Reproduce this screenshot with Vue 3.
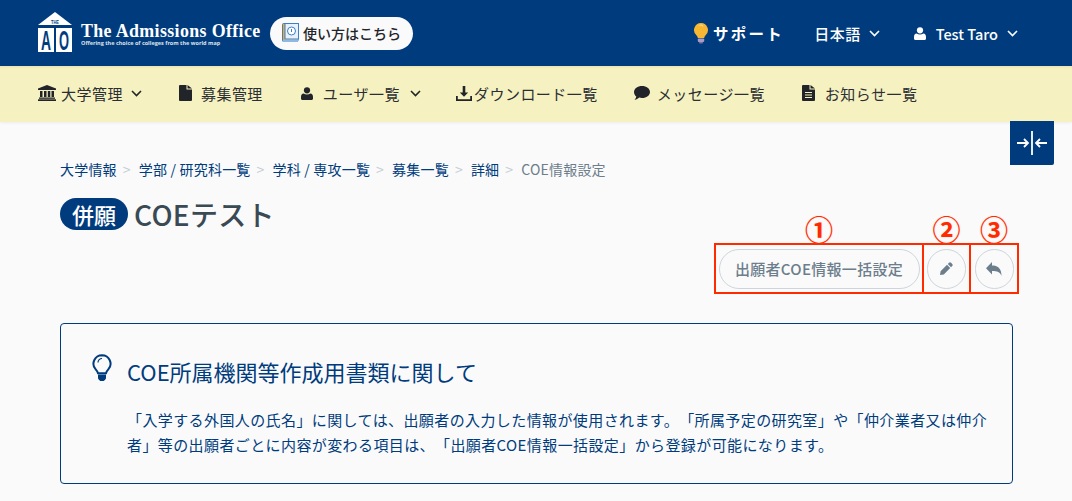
<script setup>
const crumbs = ['大学情報', '学部 / 研究科一覧', '学科 / 専攻一覧', '募集一覧', '詳細']
</script>

<template>
  <div class="page">
    <header class="top">
      <div class="brand">
        <svg class="logo" width="34" height="40" viewBox="0 0 34 40">
          <path d="M17 0 L34 13 L0 13 Z" fill="#fff" />
          <rect x="0" y="16" width="16" height="24" fill="#fff" />
          <rect x="18" y="16" width="16" height="24" fill="#fff" />
          <text x="17" y="12" class="lg-the" textLength="8" lengthAdjust="spacingAndGlyphs">THE</text>
          <text x="8" y="38" class="lg-big" textLength="10" lengthAdjust="spacingAndGlyphs">A</text>
          <text x="26" y="38" class="lg-big" textLength="10" lengthAdjust="spacingAndGlyphs">O</text>
        </svg>
        <div class="brand-text">
          <div class="brand-name">The Admissions Office</div>
          <div class="brand-sub">Offering the choice of colleges from the world map</div>
        </div>
        <a class="howto">
          <svg width="17" height="20" viewBox="0 0 17 20">
            <rect x="0.500" y="0.500" width="15.500" height="18" rx="1" fill="#f0a92e" stroke="#3d7fc4" />
            <rect x="3" y="0.500" width="13.500" height="15.500" fill="#e6f1fb" stroke="#3d7fc4" />
            <circle cx="9.500" cy="8" r="4" fill="#fff" stroke="#3d7fc4" />
            <path d="M9.500 6v3" stroke="#3d7fc4" />
            <rect x="1" y="16.500" width="15" height="2.500" fill="#8db9e4" />
          </svg>
          <span>使い方はこちら</span>
        </a>
      </div>
      <nav class="top-right">
        <a class="support">
          <svg width="16" height="22" viewBox="0 0 16 22">
            <path d="M8 1a7 7 0 0 0-4.400 12.400c.8.800 1.200 1.600 1.200 2.600h6.400c0-1 .4-1.800 1.200-2.600A7 7 0 0 0 8 1z" fill="#f7b733" />
            <path d="M8 2.500a5 5 0 0 0-3 1.500c2-.8 4-.5 5 1 .6-1.500-.6-2.500-2-2.500z" fill="#fde39a" />
            <rect x="4.800" y="16.500" width="6.400" height="3.500" rx="1" fill="#a99bc4" />
            <rect x="6" y="20" width="4" height="1.500" rx=".7" fill="#7d6fa0" />
          </svg>
          <span>サポート</span>
        </a>
        <a class="lang">日本語<svg class="chev" width="11" height="7" viewBox="0 0 11 7"><path d="M1 1l4.500 4.500L10 1" /></svg></a>
        <a class="user">
          <svg width="12" height="13" viewBox="0 0 12 13" fill="#fff"><circle cx="6" cy="3.300" r="3.100" /><path d="M2.600 6.600C3.500 7.300 4.700 7.600 6 7.600s2.500-.3 3.400-1c1.600.2 2.600 1.500 2.600 3.300v1.600c0 .9-.6 1.500-1.500 1.500h-9C.6 13 0 12.400 0 11.500V9.900c0-1.800 1-3.100 2.600-3.300z" /></svg>
          <span>Test Taro</span>
          <svg class="chev" width="11" height="7" viewBox="0 0 11 7"><path d="M1 1l4.500 4.500L10 1" /></svg>
        </a>
      </nav>
    </header>

    <nav class="sub">
      <a class="s1">
        <svg width="18" height="16" viewBox="0 0 18 16" fill="#212529"><path d="M9 0L18 3.500V5H0V3.500z" /><rect x="2" y="6" width="2.500" height="6" /><rect x="6" y="6" width="2.500" height="6" /><rect x="9.800" y="6" width="2.500" height="6" /><rect x="13.500" y="6" width="2.500" height="6" /><rect x="1" y="12.500" width="16" height="1.300" /><rect x="0" y="14.300" width="18" height="1.700" /></svg>
        <span>大学管理</span>
        <svg class="chev dark" width="11" height="7" viewBox="0 0 11 7"><path d="M1 1l4.500 4.500L10 1" /></svg>
      </a>
      <a class="s2">
        <svg width="13" height="16" viewBox="0 0 13 16" fill="#212529"><path d="M0 1a1 1 0 0 1 1-1h6.500v4.500H13V15a1 1 0 0 1-1 1H1a1 1 0 0 1-1-1z" /><path d="M8.500 0L13 3.600H8.500z" /></svg>
        <span>募集管理</span>
      </a>
      <a class="s3">
        <svg width="12" height="13" viewBox="0 0 12 13" fill="#212529"><circle cx="6" cy="3.300" r="3.100" /><path d="M2.600 6.600C3.500 7.300 4.700 7.600 6 7.600s2.500-.3 3.400-1c1.600.2 2.600 1.500 2.600 3.300v1.600c0 .9-.6 1.500-1.500 1.500h-9C.6 13 0 12.400 0 11.500V9.900c0-1.800 1-3.100 2.600-3.300z" /></svg>
        <span>ユーザ一覧</span>
        <svg class="chev dark" width="11" height="7" viewBox="0 0 11 7"><path d="M1 1l4.500 4.500L10 1" /></svg>
      </a>
      <a class="s4">
        <svg width="16" height="15" viewBox="0 0 16 15" fill="#212529"><path d="M6.700 0h2.600v6.500h2.900L8 10.800 3.800 6.500h2.900z" /><path d="M0 10h1.800v3.200h12.400V10H16v5H0z" /></svg>
        <span>ダウンロード一覧</span>
      </a>
      <a class="s5">
        <svg width="16" height="14" viewBox="0 0 16 14" fill="#212529"><path d="M8 0c4.400 0 8 2.600 8 6s-3.600 6-8 6c-1 0-1.900-.1-2.800-.4C4 12.600 2.500 13.600.6 14c.9-1 1.500-2.200 1.700-3.400C.9 9.500 0 7.800 0 6c0-3.400 3.600-6 8-6z" /></svg>
        <span>メッセージ一覧</span>
      </a>
      <a class="s6">
        <svg width="13" height="16" viewBox="0 0 13 16"><path d="M0 1a1 1 0 0 1 1-1h6.500v4.500H13V15a1 1 0 0 1-1 1H1a1 1 0 0 1-1-1z" fill="#212529" /><path d="M8.500 0L13 3.600H8.500z" fill="#212529" /><path d="M3 7.500h7M3 10h7M3 12.500h7" stroke="#f6f1c1" stroke-width="1.200" /></svg>
        <span>お知らせ一覧</span>
      </a>
    </nav>

    <main class="main">
      <button class="collapse" aria-label="collapse">
        <svg width="30" height="24" viewBox="0 0 30 24" fill="none" stroke="#fff" stroke-width="1.800">
          <path d="M15 0v24" />
          <path d="M0 12h11M7 8l4 4-4 4" />
          <path d="M30 12H19M23 8l-4 4 4 4" />
        </svg>
      </button>

      <ol class="crumbs">
        <li v-for="c in crumbs" :key="c"><a>{{ c }}</a><i>&gt;</i></li>
        <li class="cur">COE情報設定</li>
      </ol>

      <h1 class="title"><span class="badge">併願</span><span class="title-text">COEテスト</span></h1>

      <div class="actions">
        <div class="act a1">
          <span class="num">①</span>
          <button class="pill">出願者COE情報一括設定</button>
        </div>
        <div class="act a2">
          <span class="num">②</span>
          <button class="round">
            <svg width="13" height="13" viewBox="0 0 13 13" fill="#6c7d8c"><path d="M9 .8a1.500 1.500 0 0 1 2.100 0l1.100 1.100a1.500 1.500 0 0 1 0 2.100L11 5.200 7.800 2zM7 2.800L10.200 6l-6.400 6.400L0 13l.6-3.800z" /></svg>
          </button>
        </div>
        <div class="act a3">
          <span class="num">③</span>
          <button class="round">
            <svg width="16" height="14" viewBox="0 0 16 14" fill="#6c7d8c"><path d="M6 0v3.500c5.500 0 9.500 2.500 9.500 10.500-1.300-3.800-4.200-5-9.500-5v3.500L0 6.200z" /></svg>
          </button>
        </div>
      </div>

      <section class="note">
        <div class="note-head">
          <svg width="20" height="29" viewBox="0 0 20 29" fill="none">
            <path d="M10 1.200a8.500 8.500 0 0 0-6.300 14.200c1.200 1.400 2 2.700 2.300 3.800h8c.3-1.100 1.100-2.400 2.300-3.800A8.500 8.500 0 0 0 10 1.200z" stroke="#003c7d" stroke-width="2" />
            <path d="M6 20.500h8v3.500c0 .6-.3 1-.7 1.400l-1 1c-.4.400-.9.600-1.300.6H9c-.4 0-.9-.2-1.300-.6l-1-1C6.300 25 6 24.600 6 24z" fill="#003c7d" />
            <path d="M10 4.500a4 4 0 0 0-4 4" stroke="#003c7d" stroke-width="1.200" />
          </svg>
          <h2>COE所属機関等作成用書類に関して</h2>
        </div>
        <p>「入学する外国人の氏名」に関しては、出願者の入力した情報が使用されます。「所属予定の研究室」や「仲介業者又は仲介者」等の出願者ごとに内容が変わる項目は、「出願者COE情報一括設定」から登録が可能になります。</p>
      </section>
    </main>
  </div>
</template>

<style>
html, body { margin: 0; background: #fafafa; overflow: hidden; }
</style>

<style scoped>
.page {
  width: 1072px;
  height: 501px;
  overflow: hidden;
  background: #fafafa;
  font-family: "Noto Sans CJK JP", "Noto Sans", sans-serif;
  color: #212529;
  text-spacing-trim: space-all;
  letter-spacing: 0.030em;
}
a { display: flex; align-items: center; }

.top {
  height: 66px;
  background: #003c7d;
  display: flex;
  justify-content: space-between;
  align-items: center;
  color: #fff;
  box-sizing: border-box;
  padding: 0 54px 0 38px;
}
.brand { display: flex; align-items: center; }
.logo { margin-top: -2px; overflow: visible; }
.lg-the { font: 700 6px "Liberation Sans", sans-serif; fill: #003c7d; text-anchor: middle; letter-spacing: 0; }
.lg-big { font: 700 27px "Liberation Sans", sans-serif; fill: #003c7d; text-anchor: middle; letter-spacing: 0; }
.brand-text { margin-left: 9px; width: 179px; margin-top: 2px; }
.brand-name {
  font: 700 17.900px/18px "Liberation Serif", serif;
  white-space: nowrap;
  letter-spacing: 0.020em;
}
.brand-sub {
  font: 700 5.500px/7px "Open Sans", sans-serif;
  white-space: nowrap;
  letter-spacing: 0;
  opacity: .85;
}
.howto {
  margin-left: 10px;
  height: 33px;
  width: 143px;
  box-sizing: border-box;
  background: #fafafa;
  border-radius: 17px;
  color: #212529;
  padding-left: 12px;
  gap: 4px;
  font-size: 14px;
  letter-spacing: 0;
  font-weight: 500;
  white-space: nowrap;
}
.top-right { display: flex; align-items: center; font-size: 15px; letter-spacing: 0; }
.support { font-weight: 700; letter-spacing: 2.300px; gap: 4px; margin-right: 30px; font-size: 15.500px; }
.lang { gap: 8px; margin-right: 34px; font-weight: 500; letter-spacing: .5px; }
.user { font-weight: 500; font-size: 14.500px; }
.user span { margin: 0 9px 0 10px; }
.chev { fill: none; stroke: #fff; stroke-width: 1.600; }
.chev.dark { stroke: #212529; }

.sub {
  height: 56px;
  background: #f6f1c1;
  display: flex;
  align-items: center;
  padding: 0 0 2px 38px;
  box-sizing: border-box;
  font-size: 15px;
  color: #2b2f33;
  white-space: nowrap;
  box-shadow: 0 1px 3px rgba(0,0,0,.06), inset 0 3px 3px -2px rgba(0,0,0,.07);
}
.s1 { gap: 5px; }
.s1 .chev { margin-left: 3px; }
.s2 { margin-left: 37px; gap: 9px; }
.s3 { margin-left: 38px; gap: 10px; }
.s4 { margin-left: 35px; gap: 2px; }
.s5 { margin-left: 35px; gap: 6px; }
.s5 svg { width: 18px; }
.s6 { margin-left: 37px; gap: 10px; }

.main { position: relative; padding: 0 59px 0 60px; }
.collapse {
  position: absolute;
  top: -1px;
  right: 18px;
  width: 44px;
  height: 44px;
  border: 0;
  padding: 0;
  border-radius: 0 0 2px 0;
  background: #003c7d;
  display: flex;
  align-items: center;
  justify-content: center;
}
.crumbs {
  list-style: none;
  margin: 0;
  padding: 37px 0 0;
  display: flex;
  font-size: 14px;
  line-height: 20px;
  color: #003c7d;
  letter-spacing: 0.200px;
}
.crumbs li { display: flex; }
.crumbs i { font-style: normal; color: #c3ccd4; margin: 0 8px 0 6px; }
.crumbs .cur { color: #6c7d8c; }
.title {
  margin: 16px 0 0;
  display: flex;
  align-items: center;
  font-size: 28px;
  line-height: 38px;
  font-weight: 500;
  color: #3a4a54;
  letter-spacing: 0;
}
.title-text { letter-spacing: .3px; }
.badge {
  width: 68px;
  height: 32px;
  margin-right: 6px;
  border-radius: 16px;
  background: #003c7d;
  color: #fff;
  font-size: 22px;
  font-weight: 500;
  line-height: 32px;
  text-align: center;
}
.actions {
  display: flex;
  justify-content: flex-end;
  margin: 10px 0 0;
  padding-top: 0;
  transform: translateX(6px);
}
.act {
  box-sizing: border-box;
  height: 51px;
  border: 2px solid #ff2a00;
  display: flex;
  align-items: center;
  justify-content: center;
  position: relative;
}
.a1 { width: 210px; }
.a2 { width: 49px; margin-left: -2px; }
.a3 { width: 50px; margin-left: -2px; }
.num {
  position: absolute;
  top: -30px;
  left: 0;
  right: 0;
  text-align: center;
  color: #ff2a00;
  font-size: 28px;
  line-height: 28px;
  font-weight: 700;
  letter-spacing: 0;
  text-shadow: 0 0 1px rgba(255, 120, 80, .5);
}
.pill, .round {
  box-sizing: border-box;
  height: 40px;
  border: 1px solid #cdd5dc;
  border-radius: 20px;
  background: transparent;
  color: #6c7d8c;
  font-family: inherit;
  font-size: 15px;
  font-weight: 500;
  display: flex;
  align-items: center;
  justify-content: center;
  padding: 0;
}
.pill { width: 201px; letter-spacing: .3px; }
.round { width: 39px; }
.note {
  box-sizing: border-box;
  margin-top: 29px;
  width: 953px;
  height: 161px;
  border: 1px solid #003c7d;
  border-radius: 4px;
  padding: 30px 16px 0 31px;
  color: #003c7d;
}
.note-head { display: flex; align-items: flex-start; }
.note-head h2 {
  margin: 0 0 0 15px;
  font-size: 22px;
  line-height: 34px;
  font-weight: 400;
  letter-spacing: 0;
}
.note p {
  margin: 19px 0 0 35px;
  font-size: 15px;
  line-height: 25px;
  letter-spacing: .4px;
}
</style>
